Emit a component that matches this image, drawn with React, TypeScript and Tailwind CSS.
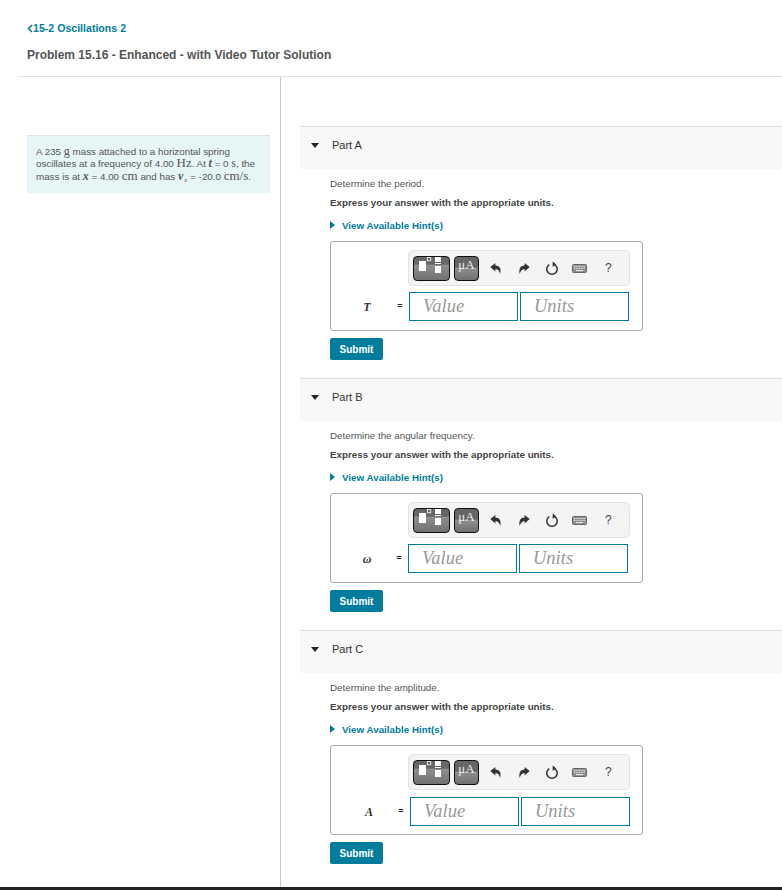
import React from "react";

const sans = "font-['Liberation_Sans',Arial,sans-serif]";
const serif = "font-['Liberation_Serif','DejaVu_Serif',serif]";

function Undo({ flip }: { flip?: boolean }) {
  return (
    <svg width="13" height="13" viewBox="0 0 12 12" className={flip ? "-scale-x-100" : ""}>
      <path d="M0.3 4.6 L5.4 0.4 V2.9 C9.4 3 11.6 6 10.2 11.6 C9.6 8.6 8.2 6.6 5.4 6.5 V8.9 Z" fill="#333" />
    </svg>
  );
}

function Reset() {
  return (
    <svg width="14" height="15" viewBox="0 0 14 15">
      <path d="M4.3 3.6 A5.2 5.2 0 1 0 9.7 3.6" fill="none" stroke="#333" strokeWidth="1.5" />
      <path d="M7.2 0.6 V6 L10.6 3.3 Z" fill="#333" transform="translate(0.5 0)" />
    </svg>
  );
}

function Keyboard() {
  return (
    <svg width="15" height="9" viewBox="0 0 15 9">
      <rect x="0.5" y="0.5" width="14" height="8" rx="1" fill="#8f8f8f" stroke="#666" />
      <path d="M2 2.4 H13 M2 4.4 H13" stroke="#eee" strokeWidth="1" strokeDasharray="1 0.7" />
      <path d="M4 6.6 H11" stroke="#eee" strokeWidth="1" />
    </svg>
  );
}

function Templates() {
  return (
    <svg width="35" height="23" viewBox="0 0 35 23">
      <rect x="5" y="4" width="7" height="10" fill="#fff" />
      <rect x="13.4" y="0.4" width="3.4" height="3.4" fill="none" stroke="#fff" strokeWidth="0.8" />
      <rect x="21" y="0" width="6" height="5" fill="#fff" />
      <rect x="21" y="6" width="6" height="1" fill="#fff" />
      <rect x="21" y="9" width="6" height="7" fill="#fff" />
    </svg>
  );
}

function Part({
  name,
  question,
  symbol,
  labelCol,
  rowMt,
  mb,
}: {
  name: string;
  question: string;
  symbol: string;
  labelCol: string;
  rowMt: string;
  mb: string;
}) {
  return (
    <section className={mb}>
      <div className="flex h-[43px] items-center border-t border-[#dcdcdc] bg-[#f8f8f8] pb-[5px]">
        <span className="ml-[11px] h-0 w-0 border-x-[4px] border-t-[5px] border-x-transparent border-t-[#222]" />
        <span className="ml-[13px] text-[11px] text-[#333]">{name}</span>
      </div>
      <div className="pl-[30px]">
        <p className="mt-[8px] h-[14px] text-[9.8px] leading-[14px] text-[#555]">{question}</p>
        <p className="mt-[5px] h-[14px] text-[9.8px] font-bold leading-[14px] text-[#444]">
          Express your answer with the appropriate units.
        </p>
        <div className="mt-[8px] flex h-[14px] items-center">
          <span className="h-0 w-0 border-y-[4px] border-l-[5px] border-y-transparent border-l-[#007d9c]" />
          <span className="ml-[7px] pt-[2px] text-[9.8px] font-bold text-[#007d9c]">View Available Hint(s)</span>
        </div>
        <div className="mt-[9px] h-[90px] w-[313px] rounded-[3px] border border-[#aaaaaa]">
          <div className="mt-[8px] ml-[77px] flex h-[36px] w-[222px] items-center rounded-[5px] border border-[#e2e2e2] bg-[#f4f4f4] pl-[4px]">
            <span className="flex h-[25px] w-[37px] items-center justify-center rounded-[4px] border border-[#111] bg-[linear-gradient(#666_0,#666_32%,#909090_34%,#707070_100%)]">
              <Templates />
            </span>
            <span
              className={`ml-[4px] flex h-[25px] w-[25px] items-start justify-center rounded-[4px] border border-[#111] bg-[linear-gradient(#666_0,#666_45%,#909090_47%,#707070_100%)] pt-[1px] text-[13px] leading-[13px] text-[#f2f2f2] ${serif}`}
            >
              μA
            </span>
            <span className="ml-[11px] flex w-[12px] justify-center"><Undo /></span>
            <span className="ml-[16px] flex w-[12px] justify-center"><Undo flip /></span>
            <span className="ml-[15px] flex w-[14px] justify-center"><Reset /></span>
            <span className="ml-[13px] flex w-[15px] justify-center"><Keyboard /></span>
            <span className="ml-[18px] text-[12px] text-[#444]">?</span>
          </div>
          <div className={`${rowMt} flex h-[29px] items-center`}>
            <span className={`${labelCol} shrink-0 text-center text-[12px] font-bold italic text-[#333] ${serif}`}>
              {symbol}
            </span>
            <span className="w-[21px] shrink-0 pl-[3px] text-center text-[9px] font-bold text-[#222]">=</span>
            <span className={`flex h-[29px] w-[109px] items-center border-[1.5px] border-[#007d9c] pl-[13px] text-[18.5px] italic text-[#999] ${serif}`}>
              Value
            </span>
            <span className={`ml-[2px] flex h-[29px] w-[109px] items-center border-[1.5px] border-[#007d9c] pl-[13px] text-[18.5px] italic text-[#999] ${serif}`}>
              Units
            </span>
          </div>
        </div>
        <button className="mt-[7px] block h-[22px] w-[53px] rounded-[2px] bg-[#007d9c] text-[10px] font-bold text-white">
          Submit
        </button>
      </div>
    </section>
  );
}

export default function App() {
  return (
    <div className={`flex h-[890px] w-[782px] flex-col overflow-hidden bg-white ${sans}`}>
      <header className="h-[77px] shrink-0">
        <div className="ml-[17px] h-[77px] border-b border-[#dfe3e8] pl-[10px] pt-[21px]">
          <a className="flex h-[14px] items-center text-[10.6px] font-semibold leading-[14px] text-[#007d9c]">
            <svg width="6" height="9" viewBox="0 0 6 9">
              <path d="M5 1 L1.5 4.5 L5 8" fill="none" stroke="#007d9c" strokeWidth="1.6" />
            </svg>
            15-2 Oscillations 2
          </a>
          <h1 className="mt-[12px] text-[12px] font-bold leading-[16px] text-[#555]">
            Problem 15.16 - Enhanced - with Video Tutor Solution
          </h1>
        </div>
      </header>
      <main className="flex min-h-0 flex-1">
        <aside className="w-[281px] shrink-0 border-r border-[#b9cde3] pl-[27px] pt-[58px]">
          <div className="h-[58px] w-[243px] border-t border-[#dfe3e8] bg-[#e6f5f6] px-[9px] pt-[9px] text-[9.8px] text-[#555]">
            <p className="h-[12.3px] whitespace-nowrap leading-[12.3px]">
              A 235 <span className={`${serif} text-[12px]`}>g</span> mass attached to a horizontal spring
            </p>
            <p className="h-[12.3px] whitespace-nowrap leading-[12.3px]">
              oscillates at a frequency of 4.00 <span className={`${serif} text-[13px]`}>Hz</span>. At{" "}
              <i className={`${serif} text-[12px] font-bold`}>t</i> = 0 <span className={`${serif} text-[12px]`}>s</span>, the
            </p>
            <p className="h-[12.3px] whitespace-nowrap leading-[12.3px]">
              mass is at <i className={`${serif} text-[12px] font-bold`}>x</i> = 4.00{" "}
              <span className={`${serif} text-[13px]`}>cm</span> and has{" "}
              <i className={`${serif} text-[12px] font-bold`}>v</i>
              <i className={`${serif} relative top-[2px] ml-[1px] text-[7px]`}>x</i> = -20.0{" "}
              <span className={`${serif} text-[13px]`}>cm/s</span>.
            </p>
          </div>
        </aside>
        <div className="min-w-0 flex-1 pl-[19px] pt-[49px]">
          <Part name="Part A" question="Determine the period." symbol="T" labelCol="w-[57px] pl-[15px]" rowMt="mt-[6px]" mb="mb-[18px]" />
          <Part name="Part B" question="Determine the angular frequency." symbol="ω" labelCol="w-[56px] pl-[16px]" rowMt="mt-[6px]" mb="mb-[18px]" />
          <Part name="Part C" question="Determine the amplitude." symbol="A" labelCol="w-[58px] pl-[18px]" rowMt="mt-[7px]" mb="" />
        </div>
      </main>
      <footer className="h-[3px] shrink-0 bg-[#222]" />
    </div>
  );
}
